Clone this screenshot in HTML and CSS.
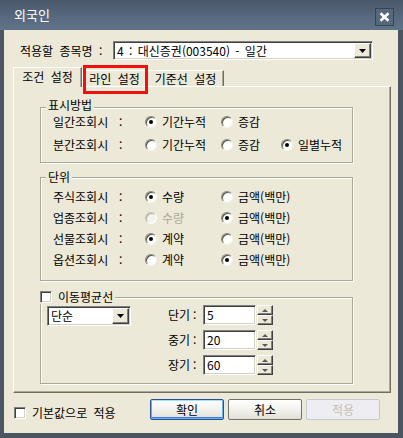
FILE: index.html
```html
<!DOCTYPE html>
<html lang="ko">
<head>
    <meta charset="UTF-8">
    <title>외국인</title>
    <link rel="stylesheet" href="styles.css">
</head>
<body>

<div class="window">
    <div class="titlebar">
        <span class="title">외국인</span>
        <span class="close">
            <svg width="11" height="10" viewBox="0 0 11 10"><path d="M1.5 1.2 L9.5 8.8 M9.5 1.2 L1.5 8.8" stroke="#fff" stroke-width="2.6"/></svg>
        </span>
    </div>
    <div class="frame">
        <div class="client">
            <div class="target-row">
                <span class="target-label">적용할 종목명 :</span>
                <div class="combo combo-wide">
                    <span class="combo-text">4 : 대신증권(003540) - 일간</span>
                    <span class="drop raised"><svg width="7" height="4" viewBox="0 0 7 4"><polygon points="0,0 7,0 3.5,4" fill="#000"/></svg></span>
                </div>
            </div>

            <div class="tabs">
                <div class="tab tab-active">조건 설정</div>
                <div class="tab tab-line">라인 설정</div>
                <div class="tab tab-base">기준선 설정</div>
                <div class="mark"></div>
            </div>

            <div class="panel">
                <fieldset class="group group-display">
                    <legend>표시방법</legend>
                    <div class="rows">
                        <div class="row">
                            <span class="row-label"><span class="name">일간조회시</span>:</span>
                            <span class="opt opt-1"><i class="radio on"></i>기간누적</span>
                            <span class="opt opt-2"><i class="radio"></i>증감</span>
                        </div>
                        <div class="row">
                            <span class="row-label"><span class="name">분간조회시</span>:</span>
                            <span class="opt opt-1"><i class="radio"></i>기간누적</span>
                            <span class="opt opt-2"><i class="radio"></i>증감</span>
                            <span class="opt"><i class="radio on"></i>일별누적</span>
                        </div>
                    </div>
                </fieldset>

                <fieldset class="group group-unit">
                    <legend>단위</legend>
                    <div class="rows">
                        <div class="row">
                            <span class="row-label"><span class="name">주식조회시</span>:</span>
                            <span class="opt opt-1"><i class="radio on"></i>수량</span>
                            <span class="opt opt-2"><i class="radio"></i>금액(백만)</span>
                        </div>
                        <div class="row">
                            <span class="row-label"><span class="name">업종조회시</span>:</span>
                            <span class="opt opt-1 disabled"><i class="radio"></i>수량</span>
                            <span class="opt opt-2"><i class="radio on"></i>금액(백만)</span>
                        </div>
                        <div class="row">
                            <span class="row-label"><span class="name">선물조회시</span>:</span>
                            <span class="opt opt-1"><i class="radio on"></i>계약</span>
                            <span class="opt opt-2"><i class="radio"></i>금액(백만)</span>
                        </div>
                        <div class="row">
                            <span class="row-label"><span class="name">옵션조회시</span>:</span>
                            <span class="opt opt-1"><i class="radio"></i>계약</span>
                            <span class="opt opt-2"><i class="radio on"></i>금액(백만)</span>
                        </div>
                    </div>
                </fieldset>

                <fieldset class="group group-ma">
                    <legend><i class="check"></i>이동평균선</legend>
                    <div class="ma-body">
                        <div class="combo combo-small">
                            <span class="combo-text">단순</span>
                            <span class="drop raised"><svg width="7" height="4" viewBox="0 0 7 4"><polygon points="0,0 7,0 3.5,4" fill="#000"/></svg></span>
                        </div>
                        <div class="periods">
                            <div class="period">
                                <span class="period-label">단기<span class="colon">:</span></span>
                                <span class="num">5</span>
                                <span class="spin"><b class="raised up"></b><b class="raised down"></b></span>
                            </div>
                            <div class="period">
                                <span class="period-label">중기<span class="colon">:</span></span>
                                <span class="num">20</span>
                                <span class="spin"><b class="raised up"></b><b class="raised down"></b></span>
                            </div>
                            <div class="period">
                                <span class="period-label">장기<span class="colon">:</span></span>
                                <span class="num">60</span>
                                <span class="spin"><b class="raised up"></b><b class="raised down"></b></span>
                            </div>
                        </div>
                    </div>
                </fieldset>
            </div>

            <div class="footer">
                <span class="default-opt"><i class="check"></i>기본값으로 적용</span>
                <button class="btn btn-ok">확인</button>
                <button class="btn">취소</button>
                <button class="btn btn-off">적용</button>
            </div>
        </div>
    </div>
</div>

</body>
</html>
```

FILE: styles.css
```css
body { margin: 0; font-family: "Noto Sans CJK KR", sans-serif; font-size: 12px; line-height: 14px; word-spacing: 3px; color: #000; }

.window { width: 403px; height: 438px; display: flex; flex-direction: column; background: #4c5663; }
.titlebar { height: 30px; flex: none; display: flex; align-items: center; padding: 0 9px 0 14px; background: linear-gradient(#4a586a, #57697e 55%, #5f7389); color: #fff; }
.title { flex: 1; font-size: 13px; }
.close { width: 19px; height: 18px; box-sizing: border-box; margin-top: 3px; border: 1px solid #39444f; background: #56687c; display: flex; align-items: center; justify-content: center; }

.frame { flex: 1; display: flex; padding: 0 5px 5px 4px; }
.client { flex: 1; background: #ece9d8; }

/* 3d borders */
.raised { box-sizing: border-box; background: #ece9d8; border: 1px solid; border-color: #fff #404040 #404040 #fff; box-shadow: inset -1px -1px 0 #808080; }

.target-row { display: flex; align-items: center; height: 19px; margin-top: 11px; padding-left: 16px; }
.target-label { width: 93px; white-space: nowrap; }

.combo { box-sizing: border-box; display: flex; align-items: center; padding: 1px; background: #fff; border: 1px solid; border-color: #808080 #fff #fff #808080; box-shadow: inset 1px 1px 0 #404040, inset -1px -1px 0 #d4d0c8; }
.combo-text { flex: 1; padding-left: 2px; white-space: nowrap; word-spacing: 2px; }
.combo-wide { width: 260px; height: 19px; }
.combo-small { width: 84px; height: 20px; margin-top: 1px; }
.drop { width: 17px; height: 100%; display: flex; align-items: center; justify-content: center; }

.tabs { position: relative; display: flex; align-items: flex-end; height: 19px; margin: 7px 0 0 9px; }
.tab { box-sizing: border-box; height: 16px; line-height: 15px; text-align: center; white-space: nowrap; border: 1px solid; border-bottom: 0; border-color: #fff #716f64 transparent #fff; box-shadow: inset -1px 0 0 #aca899; }
.tab-active { position: relative; z-index: 1; width: 69px; height: 20px; line-height: 17px; margin-bottom: -1px; background: #ece9d8; }
.tab-line { width: 65px; }
.tab-base { width: 77px; }
.mark { position: absolute; z-index: 2; left: 70px; top: -2px; width: 65px; height: 29px; box-sizing: border-box; border: 3px solid #f01010; }

.panel { box-sizing: border-box; width: 378px; height: 307px; margin-left: 9px; padding: 0 0 0 26px; border: 1px solid; border-color: #fff #716f64 #716f64 #fff; box-shadow: inset -1px -1px 0 #aca899; }

.group { box-sizing: border-box; width: 313px; margin: 0; padding: 0; min-width: 0; border: 1px solid #aca899; box-shadow: 1px 1px 0 #fff, inset 1px 1px 0 #fff; }
.group legend { margin-left: 5px; padding: 0 2px; line-height: 14px; background: #ece9d8; }
.group-display { margin-top: 11px; }
.group-display legend { padding-bottom: 4px; }
.group-unit { margin-top: 7px; }
.group-ma { margin-top: 9px; }

.rows { display: flex; flex-direction: column; padding-left: 12px; }
.group-display .rows { gap: 7px; margin-top: -2px; padding-bottom: 9px; }
.group-unit .rows { gap: 5px; padding-top: 5px; padding-bottom: 12px; }
.row { display: flex; align-items: center; height: 16px; white-space: nowrap; }
.row-label { display: flex; width: 92px; }
.name { width: 66px; }
.opt { display: flex; align-items: center; gap: 5px; }
.opt-1 { width: 76px; }
.opt-2 { width: 60px; }
.disabled { color: #aca899; }

.radio { position: relative; display: inline-block; flex: none; width: 12px; height: 12px; box-sizing: border-box; border-radius: 50%; background: #fff; border: 1px solid; border-color: #8a887c #f4f3ee #f4f3ee #8a887c; box-shadow: inset 1px 1px 0 #55534c; }
.radio.on::after { content: ""; position: absolute; left: 3px; top: 3px; width: 4px; height: 4px; border-radius: 50%; background: #000; }
.disabled .radio { background: #f4f3ee; border-color: #c6c3b6 #fff #fff #c6c3b6; box-shadow: inset 1px 1px 0 #b5b2a6; }

.check { display: inline-block; flex: none; width: 12px; height: 12px; box-sizing: border-box; background: #fff; border: 1px solid; border-color: #808080 #fff #fff #808080; box-shadow: inset 1px 1px 0 #404040, inset -1px -1px 0 #d4d0c8; }

.group-ma legend { display: flex; align-items: center; gap: 6px; margin-left: -1px; padding: 0 2px 0 0; }
.ma-body { display: flex; align-items: flex-start; padding: 1px 0 8px 6px; }
.periods { display: flex; flex-direction: column; gap: 5px; margin-left: 37px; }
.period { display: flex; align-items: center; height: 20px; }
.period-label { width: 35px; white-space: nowrap; }
.colon { margin-left: 3px; }
.num { box-sizing: border-box; width: 53px; height: 20px; padding: 2px 0 0 3px; background: #fff; border: 1px solid; border-color: #808080 #fff #fff #808080; box-shadow: inset 1px 1px 0 #404040, inset -1px -1px 0 #d4d0c8; }
.spin { display: flex; flex-direction: column; width: 16px; height: 20px; margin-left: 1px; }
.spin b { flex: 1; display: flex; align-items: center; justify-content: center; }
.spin .up::before { content: ""; border: 3px solid transparent; border-top: 0; border-bottom: 3px solid #5a5a5a; }
.spin .down::before { content: ""; border: 3px solid transparent; border-bottom: 0; border-top: 3px solid #5a5a5a; }

.footer { display: flex; align-items: flex-start; margin-top: 6px; padding-left: 10px; }
.default-opt { display: flex; align-items: center; gap: 6px; width: 136px; margin-top: 7px; white-space: nowrap; }
.btn { box-sizing: border-box; width: 74px; height: 21px; margin-right: 4px; padding: 0; font: inherit; color: #000; border: 1px solid #707070; border-radius: 2px; background: linear-gradient(#ffffff, #f3f2ee 50%, #e2e0d6); }
.btn-ok { border-color: #2b4f8f; box-shadow: inset 0 1px 0 #a6e0ff, inset 0 0 0 1px #6bb2f0, inset 0 -1px 0 1px #3a7be0; }
.btn-off { color: #c3c0b3; border-color: #c8c7d6; background: #eeedf1; }
```
